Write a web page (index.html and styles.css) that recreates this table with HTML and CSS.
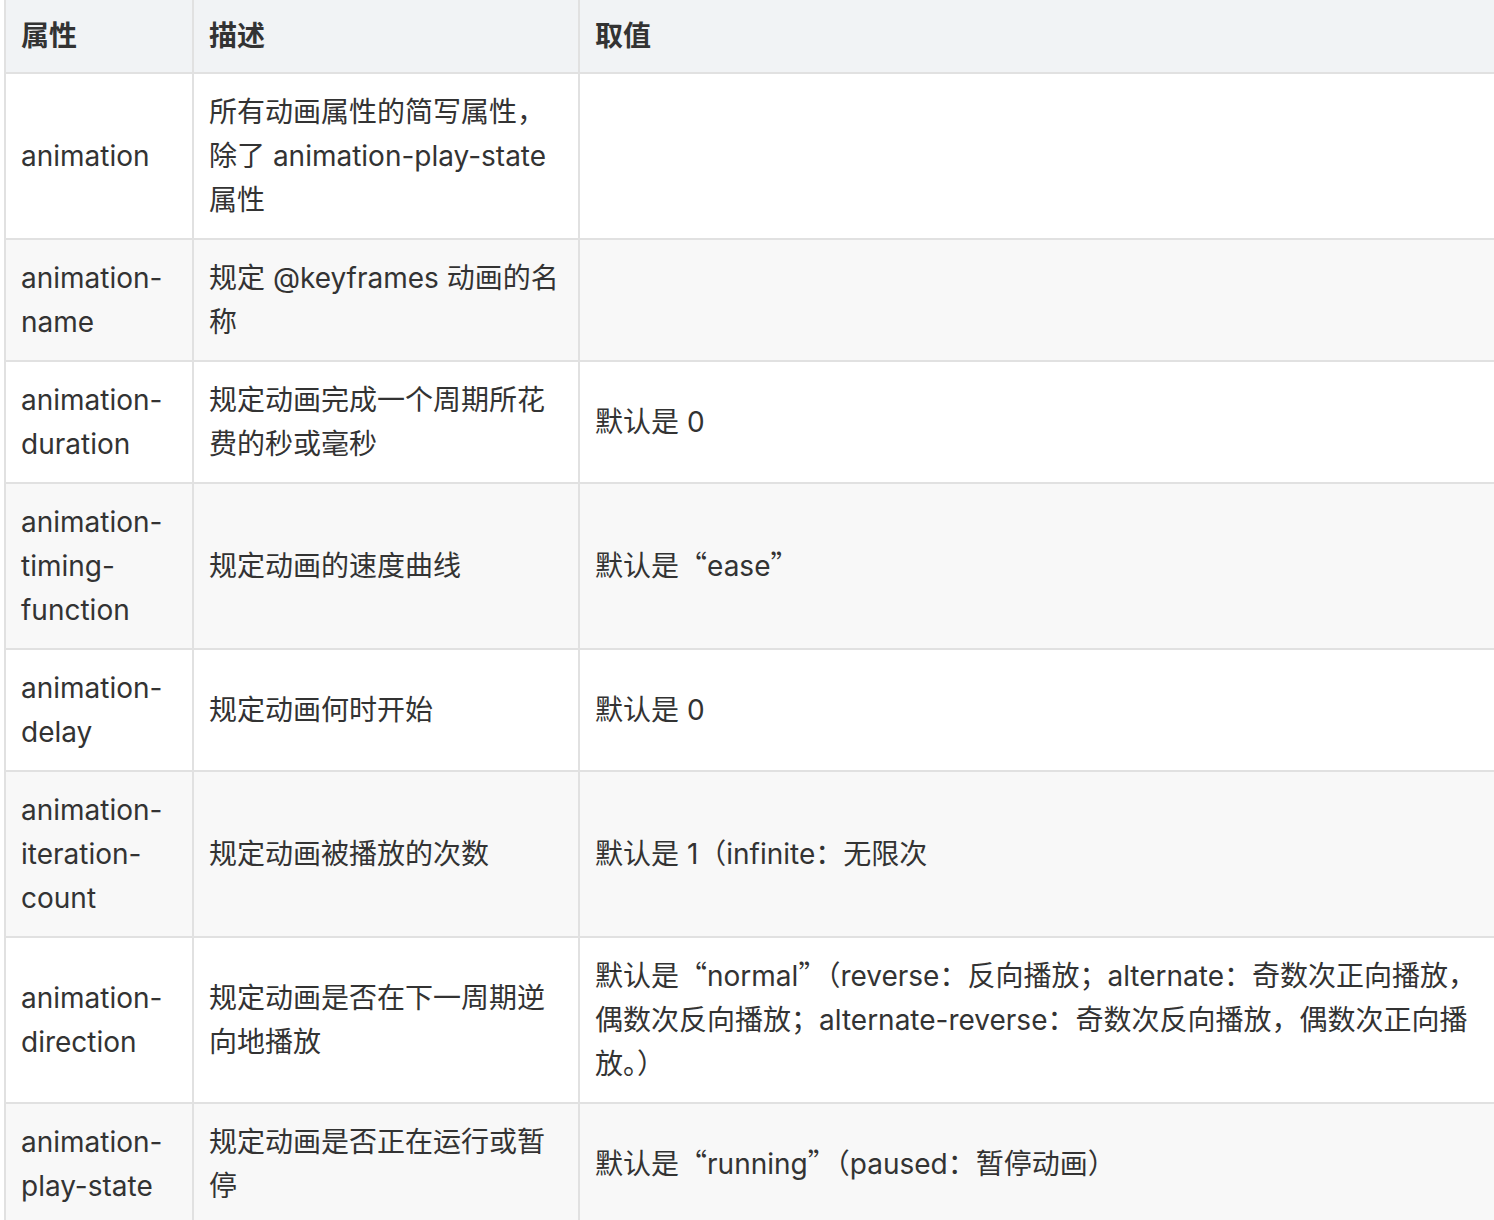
FILE: index.html
```html
<!DOCTYPE html>
<html lang="zh-CN">
<head>
<meta charset="utf-8">
<title>CSS animation 属性</title>
<link rel="stylesheet" href="styles.css">
</head>
<body>
<table class="props">
  <colgroup>
    <col class="c1">
    <col class="c2">
    <col class="c3">
  </colgroup>
  <thead>
    <tr><th>属性</th><th>描述</th><th>取值</th></tr>
  </thead>
  <tbody>
    <tr><td>animation</td><td>所有动画属性的简写属性，除了 animation-play-state 属性</td><td></td></tr>
    <tr><td>animation-name</td><td>规定 @keyframes 动画的名称</td><td></td></tr>
    <tr><td>animation-duration</td><td>规定动画完成一个周期所花费的秒或毫秒</td><td>默认是 0</td></tr>
    <tr><td>animation-timing-function</td><td>规定动画的速度曲线</td><td>默认是<span class="q">“</span>ease<span class="q">”</span></td></tr>
    <tr><td>animation-delay</td><td>规定动画何时开始</td><td>默认是 0</td></tr>
    <tr><td>animation-iteration-count</td><td>规定动画被播放的次数</td><td>默认是 1（infinite：无限次</td></tr>
    <tr><td>animation-direction</td><td>规定动画是否在下一周期逆向地播放</td><td>默认是<span class="q">“</span>normal<span class="q">”</span>（reverse：反向播放；alternate：奇数次正向播放，偶数次反向播放；alternate-reverse：奇数次反向播放，偶数次正向播放。）</td></tr>
    <tr><td>animation-play-state</td><td>规定动画是否正在运行或暂停</td><td>默认是<span class="q">“</span>running<span class="q">”</span>（paused：暂停动画）</td></tr>
  </tbody>
</table>
</body>
</html>
```

FILE: styles.css
```css
html, body {
  margin: 0;
  padding: 0;
  background: #ffffff;
  overflow: hidden;
}

.props {
  margin: 0 0 0 4px;
  width: 1494px;
  table-layout: fixed;
  border-collapse: separate;
  border-spacing: 0;
  border-left: 2px solid #e1e1e1;
  font-family: Inter, "Noto Sans CJK SC", sans-serif;
  font-size: 28px;
  line-height: 44px;
  color: #333333;
}

.c1 { width: 188px; }
.c2 { width: 386px; }

.props th,
.props td {
  padding: 16px 16px 16px 15px;
  border-right: 2px solid #e1e1e1;
  border-bottom: 2px solid #e1e1e1;
  text-align: left;
  vertical-align: middle;
  word-break: break-all;
  overflow-wrap: anywhere;
}

.props th {
  padding-top: 14px;
  padding-bottom: 14px;
  font-weight: 700;
  background: #f1f3f5;
}

.props tbody tr:nth-child(even) td {
  background: #f8f8f8;
}

.props td:first-child {
  word-break: normal;
}

.q {
  font-family: "Noto Sans CJK SC", sans-serif;
  line-height: 1;
}
```
